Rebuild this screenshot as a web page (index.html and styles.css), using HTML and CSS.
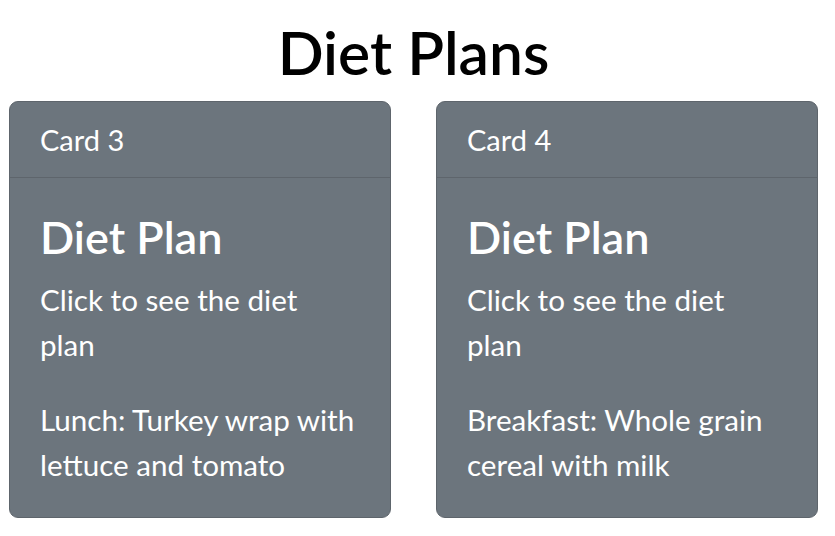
FILE: index.html
```html
<!DOCTYPE html>
<html lang="en">
<head>
<meta charset="utf-8">
<title>Diet Plans</title>
<link rel="stylesheet" href="styles.css">
</head>
<body>
<h1 class="page-title">Diet Plans</h1>
<div class="cards">
  <div class="card">
    <div class="card-header">Card 3</div>
    <div class="card-body">
      <h5 class="card-title">Diet Plan</h5>
      <p class="card-text">Click to see the diet plan</p>
      <p class="card-text">Lunch: Turkey wrap with lettuce and tomato</p>
    </div>
  </div>
  <div class="card">
    <div class="card-header">Card 4</div>
    <div class="card-body">
      <h5 class="card-title">Diet Plan</h5>
      <p class="card-text">Click to see the diet plan</p>
      <p class="card-text">Breakfast: Whole grain cereal with milk</p>
    </div>
  </div>
</div>
</body>
</html>
```

FILE: styles.css
```css
html, body {
  margin: 0;
  padding: 0;
  background: #fff;
}
body {
  font-family: Lato, "Noto Sans", sans-serif;
  color: #000;
  padding: 16px 17px 0 9px;
}
.page-title {
  margin: 0 0 14px;
  text-align: center;
  font-size: 60.5px;
  font-weight: 600;
  line-height: 71px;
}
.cards {
  display: grid;
  grid-template-columns: 382px 382px;
  column-gap: 45px;
}
.card {
  background: #6c757d;
  color: #fff;
  border: 1px solid #5e656c;
  border-radius: 9px;
  overflow: hidden;
}
.card-header {
  padding: 15px 30px;
  font-size: 29px;
  line-height: 45px;
  border-bottom: 1px solid #5e656c;
}
.card-body {
  padding: 32px 32px 30px 30px;
}
.card-title {
  margin: 0 0 13px;
  font-size: 45px;
  font-weight: 600;
  line-height: 54px;
}
.card-text {
  margin: 0 0 30px;
  font-size: 29.6px;
  line-height: 45px;
}
.card-text:last-child {
  margin-bottom: 0;
}
```
